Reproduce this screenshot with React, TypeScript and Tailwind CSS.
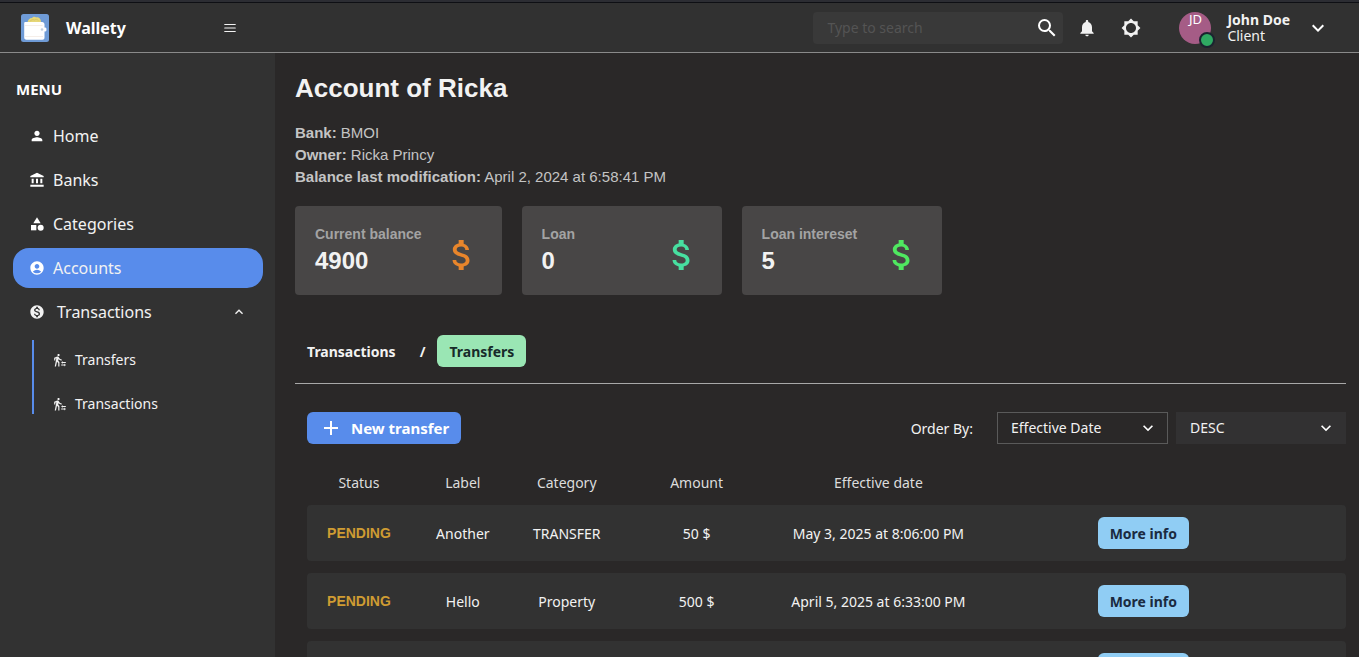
import type { ReactNode } from 'react';
import type { IconType } from 'react-icons';
import {
  MdAccountBalance,
  MdAccountCircle,
  MdAdd,
  MdAttachMoney,
  MdBrightness5,
  MdCategory,
  MdKeyboardArrowDown,
  MdKeyboardArrowUp,
  MdMonetizationOn,
  MdNotifications,
  MdPerson,
  MdSearch,
  MdTransferWithinAStation,
} from 'react-icons/md';

const navItems: { label: string; icon: IconType; active?: boolean }[] = [
  { label: 'Home', icon: MdPerson },
  { label: 'Banks', icon: MdAccountBalance },
  { label: 'Categories', icon: MdCategory },
  { label: 'Accounts', icon: MdAccountCircle, active: true },
];

const stats = [
  { label: 'Current balance', value: '4900', color: 'text-[#e8852b]' },
  { label: 'Loan', value: '0', color: 'text-[#47dfa0]' },
  { label: 'Loan intereset', value: '5', color: 'text-[#4fe860]' },
];

const transfers = [
  { label: 'Another', category: 'TRANSFER', amount: '50 $', date: 'May 3, 2025 at 8:06:00 PM' },
  { label: 'Hello', category: 'Property', amount: '500 $', date: 'April 5, 2025 at 6:33:00 PM' },
  { label: 'Salary', category: 'Work', amount: '900 $', date: 'April 2, 2025 at 5:10:00 PM' },
];

function Logo() {
  return (
    <svg viewBox="0 0 30 30" className="size-[30px] shrink-0" aria-hidden="true">
      <rect x="1" y="1" width="28" height="28" rx="2.5" fill="#6f9bd6" />
      <path d="M7.500 10c0-3 2-5 4.500-5 1-1.500 3-1.600 4.200-.6 2-.7 4.300.8 4.600 3l.4 3z" fill="#e6d777" />
      <path d="M10 8.500c.8-1.800 2.800-2.400 4.400-1.500 1-.9 3-.9 4 .5" fill="none" stroke="#d3c05f" strokeWidth=".8" />
      <path d="M5.500 9h16.500c1.500 0 2.500 1 2.500 2.500v3h.7c1 0 1.300.8 1.300 2s-.3 2-1.300 2h-.7V24.500c0 1.500-.8 2.200-2.200 2.200H6.500c-1.500 0-2.300-.8-2.300-2.200V10.300C4.200 9.500 4.700 9 5.500 9z" fill="#fff" />
      <path d="M4.500 12.500h18M5 23.500h18" stroke="#f0e6df" strokeWidth=".7" />
      <circle cx="22" cy="16.500" r="1.300" fill="#c3cfe0" />
    </svg>
  );
}

function MenuIcon() {
  return (
    <svg viewBox="0 0 24 24" className="size-[14px]" aria-hidden="true">
      <path d="M3 6h18M3 12h18M3 18h18" stroke="currentColor" strokeWidth="2" strokeLinecap="round" />
    </svg>
  );
}

function Header() {
  return (
    <header className="shrink-0 border-b border-[#8a8a8a] bg-[#313131]">
      <div className="h-[3px] border-b border-[#0e0f14] bg-[#2c2d33]" />
      <div className="flex h-[49px] items-center justify-between pl-5 pr-[29px]">
        <div className="flex items-center">
          <Logo />
          <span className="ml-4 w-[157px] text-base font-bold text-white">Wallety</span>
          <button type="button" aria-label="Toggle menu" className="text-[#f2f2f2]">
            <MenuIcon />
          </button>
        </div>
        <div className="flex items-center">
          <div className="flex h-8 w-[250px] items-center rounded-sm bg-[#393939] pl-[14px] pr-1">
            <input
              type="search"
              aria-label="Search"
              placeholder="Type to search"
              className="min-w-0 flex-1 bg-transparent text-sm text-white outline-none placeholder:text-[#545454]"
            />
            <button type="button" aria-label="Search" className="text-white">
              <MdSearch size={24} />
            </button>
          </div>
          <button type="button" aria-label="Notifications" className="ml-[14px] text-[#f2f2f2]">
            <MdNotifications size={20} />
          </button>
          <button type="button" aria-label="Switch color mode" className="ml-6 text-[#f2f2f2]">
            <MdBrightness5 size={20} />
          </button>
          <button type="button" className="ml-[38px] flex items-center text-left">
            <span className="relative flex size-8 justify-center rounded-full bg-[#a55c86] text-[13px] leading-[14px] text-white">
              JD
              <span className="absolute -bottom-1 -right-1 size-4 rounded-full border-2 border-[#1b2430] bg-[#2faa62]" />
            </span>
            <span className="ml-4 flex flex-col text-sm leading-4 text-[#f2f2f2]">
              <strong className="font-bold">John Doe</strong>
              <span>Client</span>
            </span>
            <MdKeyboardArrowDown size={24} className="ml-4 text-white" />
          </button>
        </div>
      </div>
    </header>
  );
}

function Sidebar() {
  return (
    <aside className="w-[275px] shrink-0 bg-[#323232] pl-[13px] pr-3 pt-[26px]">
      <h2 className="px-[3px] text-[15px] font-bold leading-5 text-white">MENU</h2>
      <nav className="mt-[17px] flex flex-col gap-1 text-base text-[#f2f2f2]">
        {navItems.map(({ label, icon: Icon, active }) => (
          <a
            key={label}
            href="#"
            className={
              active
                ? 'flex h-10 items-center gap-2 rounded-2xl bg-[#588ceb] px-4 text-[#f2f2f2]'
                : 'flex h-10 items-center gap-2 rounded-2xl px-4'
            }
          >
            <Icon size={16} className="text-white" />
            {label}
          </a>
        ))}
        <button type="button" className="flex h-10 items-center gap-3 px-4" aria-expanded="true">
          <MdMonetizationOn size={16} />
          <span className="flex-1 text-left">Transactions</span>
          <MdKeyboardArrowUp size={16} />
        </button>
        <ul className="ml-[19px] mt-1 flex flex-col gap-6 border-l-2 border-[#588ceb] pl-[19px] pt-[10px] text-sm">
          {['Transfers', 'Transactions'].map((label) => (
            <li key={label}>
              <a href="#" className="flex h-5 items-center gap-2">
                <MdTransferWithinAStation size={14} />
                {label}
              </a>
            </li>
          ))}
        </ul>
      </nav>
    </aside>
  );
}

function Select({ id, label, className, children }: { id: string; label: string; className: string; children: ReactNode }) {
  return (
    <div className="grid items-center">
      <select
        id={id}
        aria-label={label}
        className={`col-start-1 row-start-1 h-8 appearance-none border pl-[13px] pr-8 text-sm text-[#f2f2f2] ${className}`}
      >
        {children}
      </select>
      <MdKeyboardArrowDown
        size={20}
        className="pointer-events-none col-start-1 row-start-1 mr-[10px] justify-self-end text-white"
      />
    </div>
  );
}

function TransferTable() {
  return (
    <table className="mt-4 w-full table-fixed border-separate border-spacing-x-0 border-spacing-y-3 text-center text-sm leading-[21px] text-[#f2f2f2]">
      <colgroup>
        <col className="w-[10%]" />
        <col className="w-[10%]" />
        <col className="w-[10%]" />
        <col className="w-[15%]" />
        <col className="w-[20%]" />
        <col className="w-[31%]" />
        <col className="w-[4%]" />
      </colgroup>
      <thead>
        <tr className="h-[21px] text-[#dcdcdc]">
          {['Status', 'Label', 'Category', 'Amount', 'Effective date'].map((title) => (
            <th key={title} className="p-0 font-normal">
              {title}
            </th>
          ))}
          <td />
          <td />
        </tr>
      </thead>
      <tbody>
        {transfers.map((row) => (
          <tr key={row.label} className="h-14 bg-[#323232]">
            <td className="rounded-l p-0 font-['Liberation_Sans',sans-serif] font-bold text-[#cf9c32]">PENDING</td>
            <td className="p-0">{row.label}</td>
            <td className="p-0">{row.category}</td>
            <td className="p-0">{row.amount}</td>
            <td className="p-0">{row.date}</td>
            <td className="p-0">
              <button type="button" className="h-8 rounded-md bg-[#90cdf4] px-3 font-bold text-[#1a2a40]">
                More info
              </button>
            </td>
            <td className="rounded-r p-0" />
          </tr>
        ))}
      </tbody>
    </table>
  );
}

export default function App() {
  return (
    <div className="flex h-screen flex-col overflow-hidden bg-[#2a2828] font-['Noto_Sans',sans-serif]">
      <Header />
      <div className="flex min-h-0 flex-1">
        <Sidebar />
        <main className="min-w-0 flex-1 overflow-y-auto pb-5 pl-5 pr-[13px] pt-5 [scrollbar-width:none]">
          <div className="font-['Liberation_Sans',sans-serif]">
            <h1 className="text-[26px] font-bold leading-[30px] text-[#f2f2f2]">Account of Ricka</h1>
            <div className="mt-[19px] text-[15px] leading-[22px] text-[#c4c4c4]">
              <p><b>Bank:</b> BMOI</p>
              <p><b>Owner:</b> Ricka Princy</p>
              <p><b>Balance last modification:</b> April 2, 2024 at 6:58:41 PM</p>
            </div>
            <div className="mt-[18px] flex gap-5">
              {stats.map((stat) => (
                <section key={stat.label} className="flex min-w-[200px] items-end justify-between gap-5 rounded bg-[#484646] p-5">
                  <div>
                    <h2 className="text-sm font-bold leading-4 text-[#a3a3a3]">{stat.label}</h2>
                    <p className="mt-1 text-2xl font-bold leading-[29px] text-[#f2f2f2]">{stat.value}</p>
                  </div>
                  <MdAttachMoney size={40} className={stat.color} />
                </section>
              ))}
            </div>
          </div>

          <div className="mt-10 flex items-center border-b border-[#a8a8a8] pb-4 text-sm font-bold leading-[21px] text-[#f2f2f2]">
            <button type="button" className="h-8 rounded-md px-3">Transactions</button>
            <span className="mx-3">/</span>
            <button type="button" className="h-8 rounded-md bg-[#9ae6b4] px-3 text-[#172b2a]">Transfers</button>
          </div>

          <div className="mt-7 pl-3">
            <div className="flex items-center justify-between">
              <button type="button" className="flex h-8 items-center gap-2 rounded-md bg-[#588ceb] px-3 text-[15px] font-bold leading-[21px] text-white">
                <MdAdd size={24} />
                New transfer
              </button>
              <div className="flex items-center gap-2">
                <span className="mr-4 text-sm leading-[21px] text-[#f2f2f2]">Order By:</span>
                <Select id="order-field" label="Order by field" className="w-[171px] border-[#5a5a5a] bg-transparent">
                  <option>Effective Date</option>
                  <option>Amount</option>
                </Select>
                <Select id="order-direction" label="Order direction" className="w-[170px] border-[#323132] bg-[#323132]">
                  <option>DESC</option>
                  <option>ASC</option>
                </Select>
              </div>
            </div>
            <TransferTable />
          </div>
        </main>
      </div>
    </div>
  );
}
